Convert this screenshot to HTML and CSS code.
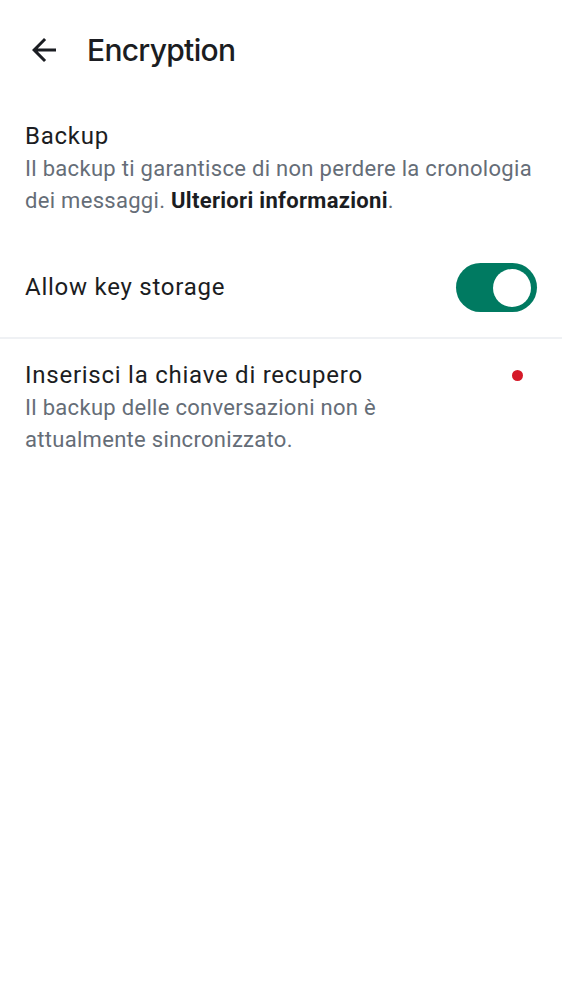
FILE: index.html
```html
<!DOCTYPE html>
<html>
<head>
<meta charset="utf-8">
<link rel="stylesheet" href="styles.css">
</head>
<body>
<div class="app">
  <header class="topbar">
    <button class="back" aria-label="Back">
      <svg width="36" height="36" viewBox="0 0 24 24"><path d="M20 11H7.83l5.59-5.59L12 4l-8 8 8 8 1.41-1.41L7.83 13H20v-2z" fill="#1b1d22"/></svg>
    </button>
    <h1 class="title">Encryption</h1>
  </header>
  <section class="item">
    <div class="item-title">Backup</div>
    <div class="item-sub">Il backup ti garantisce di non perdere la cronologia dei messaggi. <b>Ulteriori informazioni</b>.</div>
  </section>
  <section class="row">
    <div class="item-title">Allow key storage</div>
    <div class="switch"><div class="knob"></div></div>
  </section>
  <div class="divider"></div>
  <section class="item with-dot">
    <div class="text">
      <div class="item-title">Inserisci la chiave di recupero</div>
      <div class="item-sub narrow">Il backup delle conversazioni non è attualmente sincronizzato.</div>
    </div>
    <span class="dot"></span>
  </section>
</div>
</body>
</html>
```

FILE: styles.css
```css
html, body { margin: 0; padding: 0; background: #fff; }
body { font-family: Roboto, "Noto Sans", sans-serif; color: #1b1d22; }
.app { width: 562px; }
.topbar { display: flex; align-items: center; height: 100px; padding-left: 26px; box-sizing: border-box; }
.back { border: 0; background: none; padding: 0; width: 36px; height: 36px; display: flex; margin-right: 25px; cursor: pointer; }
.title { margin: 0; font-family: Inter, Roboto, sans-serif; font-weight: 500; font-size: 30px; letter-spacing: -0.7px; color: #1b1d22; }
.item { padding: 20px 25px 0 25px; }
.item-title { font-size: 24px; line-height: 33px; letter-spacing: 0.75px; color: #1b1d22; }
.item-sub { font-size: 22px; line-height: 32px; color: #656d77; letter-spacing: 0.3px; }
.item-sub b { color: #1b1d22; font-weight: 700; }
.row { display: flex; align-items: center; justify-content: space-between; padding: 0 25px; height: 99px; margin-top: 21px; }
.switch { width: 81px; height: 49px; border-radius: 25px; background: #007a61; position: relative; }
.knob { position: absolute; right: 6px; top: 5.5px; width: 38px; height: 38px; border-radius: 50%; background: #fff; }
.divider { height: 2px; background: #eff1f4; }
.with-dot { display: flex; justify-content: space-between; align-items: flex-start; padding-top: 20px; }
.narrow { max-width: 460px; line-height: 31.5px; }
.dot { width: 11px; height: 11px; border-radius: 50%; background: #d51928; margin-top: 11px; margin-right: 14px; flex: none; }
```
